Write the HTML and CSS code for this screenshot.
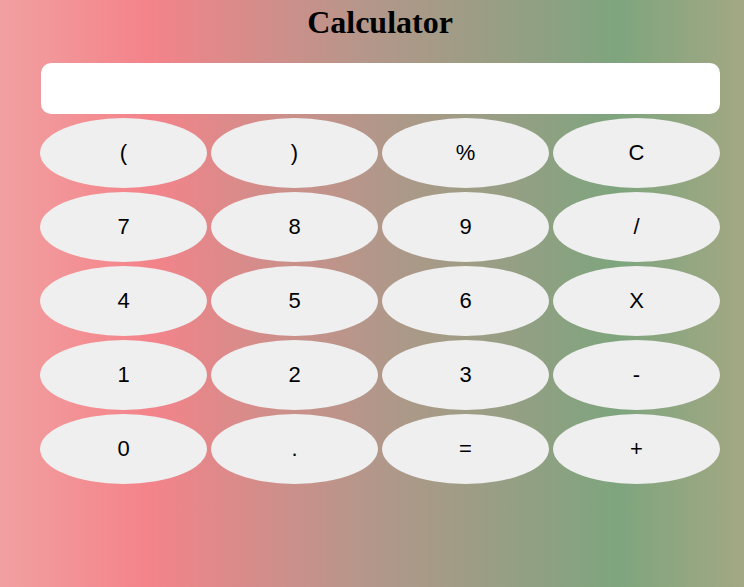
FILE: index.html
```html
<!DOCTYPE html>
<html>
<head>
<meta charset="utf-8">
<link rel="stylesheet" href="styles.css">
</head>
<body>
<div class="calc">
  <h1 class="title">Calculator</h1>
  <div class="display"></div>
  <div class="keys">
    <button class="key">(</button>
    <button class="key">)</button>
    <button class="key">%</button>
    <button class="key">C</button>
    <button class="key">7</button>
    <button class="key">8</button>
    <button class="key">9</button>
    <button class="key">/</button>
    <button class="key">4</button>
    <button class="key">5</button>
    <button class="key">6</button>
    <button class="key">X</button>
    <button class="key">1</button>
    <button class="key">2</button>
    <button class="key">3</button>
    <button class="key">-</button>
    <button class="key">0</button>
    <button class="key">.</button>
    <button class="key">=</button>
    <button class="key">+</button>
  </div>
</div>
</body>
</html>
```
FILE: styles.css
```css
html, body {
  margin: 0;
  height: 100%;
}
body {
  background: linear-gradient(to right, #f1a0a1 0%, #f4838a 20%, #b3978a 50%, #7ea57e 83%, #a3a883 100%);
  font-family: "Liberation Serif", serif;
}
.calc {
  padding: 4px 24px 0 40px;
}
.title {
  margin: 0 0 22px 0;
  text-align: center;
  font-size: 32px;
  font-weight: bold;
  line-height: 37px;
  color: #000;
}
.display {
  margin-left: 1px;
  width: 679px;
  height: 51px;
  background: #fff;
  border-radius: 10px;
  margin-bottom: 4px;
}
.keys {
  display: grid;
  grid-template-columns: repeat(4, 167px);
  grid-auto-rows: 70px;
  gap: 4px;
}
.key {
  border: none;
  border-radius: 50%;
  background: #efefef;
  font-family: "Liberation Sans", Arial, sans-serif;
  font-size: 22px;
  color: #000;
  padding: 0;
}
```
